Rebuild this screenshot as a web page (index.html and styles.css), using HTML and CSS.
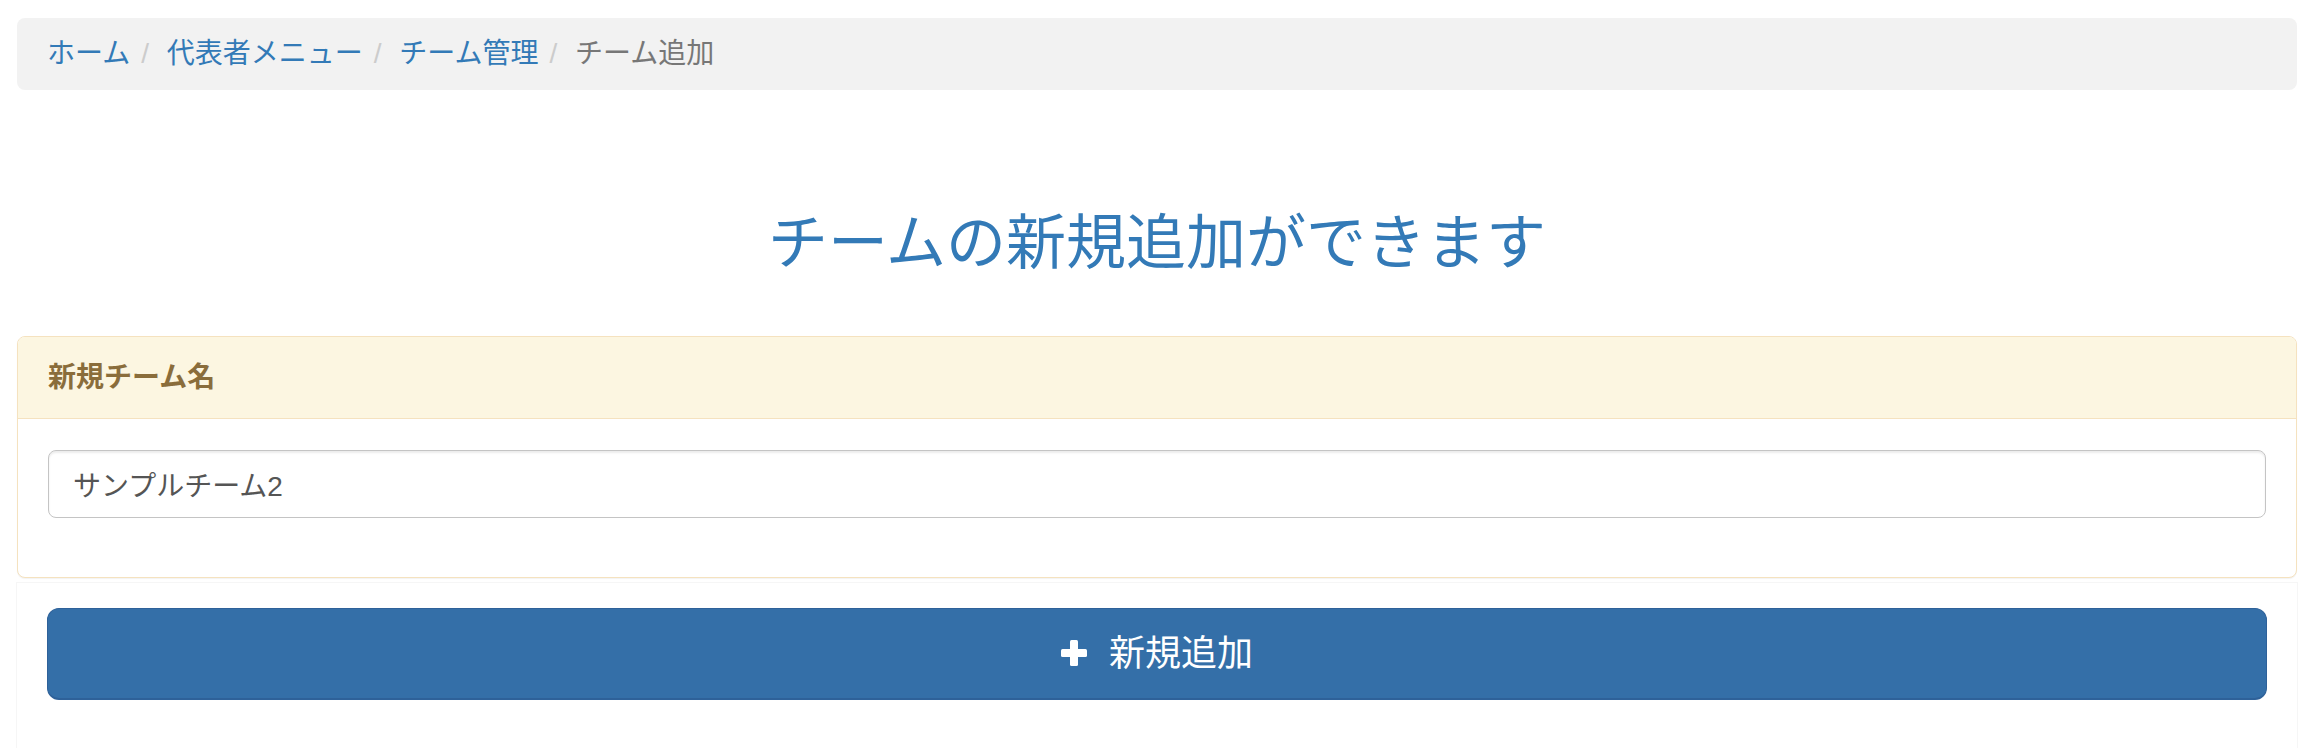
FILE: index.html
```html
<!DOCTYPE html>
<html lang="ja">
<head>
  <meta charset="UTF-8">
  <title>チーム追加</title>
  <link rel="stylesheet" href="styles.css">
</head>
<body>
  <div class="container">
    <ol class="breadcrumb">
      <li><a href="#">ホーム</a></li>
      <li><a href="#">代表者メニュー</a></li>
      <li><a href="#">チーム管理</a></li>
      <li class="active">チーム追加</li>
    </ol>

    <h2 class="page-title">チームの新規追加ができます</h2>

    <form>
      <div class="panel panel-warning">
        <div class="panel-heading">新規チーム名</div>
        <div class="panel-body">
          <div class="form-group">
            <input type="text" class="form-control" name="team_name" value="サンプルチーム2">
          </div>
        </div>
      </div>

      <div class="panel panel-plain">
        <div class="panel-body">
          <button type="submit" class="btn btn-primary btn-block">
            <svg class="icon-plus" width="26" height="26" viewBox="0 0 26 26" aria-hidden="true">
              <rect x="9" y="0" width="8" height="26" rx="1.5"/>
              <rect x="0" y="9" width="26" height="8" rx="1.5"/>
            </svg>
            <span>新規追加</span>
          </button>
        </div>
      </div>
    </form>
  </div>
</body>
</html>
```

FILE: styles.css
```css
* {
  box-sizing: border-box;
}
body {
  margin: 0;
  font-family: "Liberation Sans", "Noto Sans CJK JP", sans-serif;
  font-size: 28px;
  line-height: 40px;
  color: #333;
  background-color: #fff;
}
a {
  color: #337ab7;
  text-decoration: none;
}
.container {
  padding: 18px 17px 0;
}

/* パンくず */
.breadcrumb {
  display: flex;
  list-style: none;
  margin: 0;
  padding: 16px 30px;
  background-color: #f2f2f2;
  border-radius: 8px;
}
.breadcrumb li + li:before {
  content: "/\00a0";
  padding: 0 10px 0 11px;
  color: #ccc;
}
.breadcrumb .active {
  color: #777;
}

.page-title {
  margin: 121px 0 59px;
  font-size: 60px;
  line-height: 66px;
  font-weight: normal;
  text-align: center;
  color: #337ab7;
}

/* パネル */
.panel {
  background-color: #fff;
  border: 1px solid transparent;
  border-radius: 8px;
}
.panel-warning {
  border-color: #f5e2bf;
  box-shadow: 0 1px 1px rgba(0, 0, 0, .05);
}
.panel-warning .panel-heading {
  padding: 20px 30px;
  line-height: 41px;
  font-weight: bold;
  color: #8a6d3b;
  background-color: #fcf6e1;
  border-bottom: 1px solid #f5e2bf;
  border-radius: 7px 7px 0 0;
}
.panel-warning .panel-body {
  padding: 31px 30px 29px;
}
.form-group {
  margin-bottom: 30px;
}
.form-control {
  display: block;
  width: 100%;
  height: 68px;
  padding: 12px 24px;
  font-family: inherit;
  font-size: 28px;
  color: #555;
  background-color: #fff;
  border: 1px solid #c4c4c4;
  border-radius: 8px;
  box-shadow: inset 0 2px 2px rgba(0, 0, 0, .075);
}

.panel-plain {
  margin: 4px -1px 0;
  border-color: #f6f6f6;
  border-radius: 0;
  border-bottom: none;
}
.panel-plain .panel-body {
  padding: 25px 30px 60px;
}

/* ボタン */
.btn {
  display: inline-flex;
  align-items: center;
  justify-content: center;
  gap: 22px;
  padding: 21px 32px;
  font-family: inherit;
  font-size: 36px;
  line-height: 48px;
  border: 1px solid transparent;
  border-radius: 12px;
  cursor: pointer;
}
.btn-block {
  display: flex;
  width: 100%;
}
.btn-primary {
  color: #fff;
  background-color: #346fa8;
  border-color: #2e6199;
  border-bottom-width: 2px;
  padding-bottom: 20px;
}
.btn-primary:hover {
  background-color: #286090;
}
.icon-plus {
  fill: #fff;
  margin-top: -2px;
}
```
